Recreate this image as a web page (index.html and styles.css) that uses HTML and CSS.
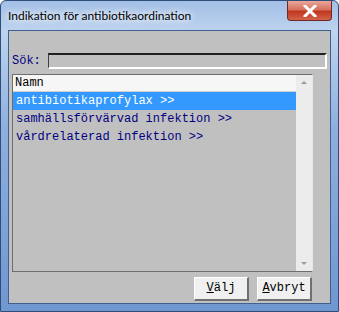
FILE: index.html
```html
<!DOCTYPE html>
<html>
<head>
    <meta charset="utf-8">
    <title>Indikation för antibiotikaordination</title>
    <link rel="stylesheet" href="styles.css">
</head>
<body>
    <div class="window">
        <div class="titlebar">
            <span class="title">Indikation för antibiotikaordination</span>
            <div class="close">
                <svg width="14" height="12" viewBox="0 0 14 12">
                    <path d="M2 1 L12 11 M12 1 L2 11" stroke="#fff" stroke-width="3" stroke-linecap="square"/>
                </svg>
            </div>
        </div>
        <div class="client">
            <div class="search">
                <label class="search-label">Sök:</label>
                <div class="search-input"></div>
            </div>
            <div class="list">
                <div class="list-body">
                    <div class="list-header">Namn</div>
                    <div class="row current">antibiotikaprofylax &gt;&gt;</div>
                    <div class="row">samhällsförvärvad infektion &gt;&gt;</div>
                    <div class="row">vårdrelaterad infektion &gt;&gt;</div>
                </div>
                <div class="scrollbar">
                    <div class="arrow up"></div>
                    <div class="arrow down"></div>
                </div>
            </div>
            <div class="buttons">
                <div class="btn"><u>V</u>älj</div>
                <div class="btn"><u>A</u>vbryt</div>
            </div>
        </div>
    </div>
</body>
</html>
```

FILE: styles.css
```css
*{
    padding: 0;
    margin: 0;
    box-sizing: border-box;
}
html,body{
    width: 100%;
    height: 100%;
    background: #fff;
}
.window{
    width: 339px;
    height: 312px;
    display: flex;
    flex-direction: column;
    background: linear-gradient(to bottom, #a3bfe6 0%, #bed4ef 10%, #8fb0de 40%, #6f97d0 100%);
    border: 1px solid #2f4d7a;
    border-radius: 6px 6px 0 0;
}
.titlebar{
    height: 29px;
    display: flex;
    align-items: flex-start;
    padding-left: 7px;
}
.title{
    margin-top: 7px;
    font-family: Lato, "Noto Sans", sans-serif;
    font-size: 12px;
    color: #000;
    text-shadow: 0 0 6px #fff, 0 0 8px #fff;
}
.close{
    margin-left: auto;
    margin-right: 6px;
    width: 45px;
    height: 20px;
    display: flex;
    align-items: center;
    justify-content: center;
    background: linear-gradient(to bottom, #e8a89c 0%, #d7715f 45%, #c0381f 55%, #d2634a 100%);
    border: 1px solid #6e2a22;
    border-top: none;
    border-radius: 0 0 4px 4px;
}
.client{
    margin: 0 7px;
    height: 274px;
    background: #c0c0c0;
    border: 1px solid #3f5f8e;
    padding: 22px 3px 0 3px;
    display: flex;
    flex-direction: column;
}
.search{
    display: flex;
    align-items: center;
    height: 16px;
}
.search-label{
    width: 36px;
    font-family: "Liberation Mono", monospace;
    font-size: 12px;
    color: #000080;
}
.search-input{
    flex: 1;
    height: 16px;
    border-top: 2px solid #202020;
    border-left: 1px solid #404040;
    border-right: 2px solid #fff;
    border-bottom: 2px solid #fff;
    background: #c0c0c0;
}
.list{
    margin-top: 5px;
    margin-right: 14px;
    height: 198px;
    display: flex;
    border: 1px solid #6e6e6e;
    border-right-color: #e8e8e8;
}
.list-body{
    flex: 1;
    font-family: "Liberation Mono", monospace;
    font-size: 12px;
}
.list-header{
    height: 17px;
    line-height: 17px;
    padding-left: 2px;
    background: #f6f6f6;
    border-bottom: 1px solid #d0d0d0;
    color: #000;
}
.row{
    height: 18px;
    line-height: 18px;
    padding-left: 3px;
    color: #000080;
}
.row.current{
    background: #3399ff;
    color: #fff;
}
.scrollbar{
    width: 16px;
    background: #ececec;
    display: flex;
    flex-direction: column;
    justify-content: space-between;
    padding: 6px 0;
}
.arrow{
    width: 0;
    height: 0;
    margin: 0 auto;
    border-left: 3px solid transparent;
    border-right: 3px solid transparent;
}
.arrow.up{
    border-bottom: 3px solid #9a9a9a;
}
.arrow.down{
    border-top: 3px solid #9a9a9a;
}
.buttons{
    margin-top: 5px;
    margin-right: 15px;
    display: flex;
    justify-content: flex-end;
    gap: 8px;
}
.btn{
    width: 55px;
    height: 24px;
    line-height: 21px;
    text-align: center;
    font-family: "Liberation Mono", monospace;
    font-size: 12px;
    color: #000;
    background: #f0f0f0;
    border-top: 1px solid #fff;
    border-left: 1px solid #fff;
    border-right: 2px solid #707070;
    border-bottom: 2px solid #707070;
}
```
